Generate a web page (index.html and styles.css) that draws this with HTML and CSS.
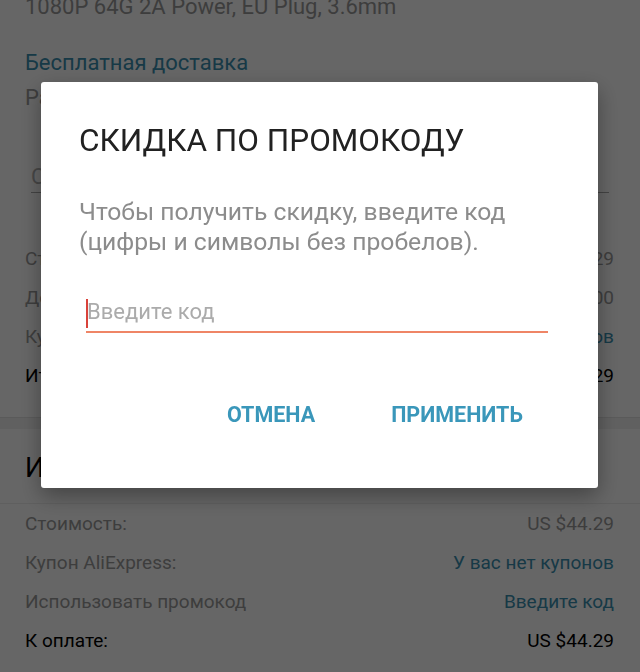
FILE: index.html
```html
<!DOCTYPE html>
<html lang="ru">
<head>
<meta charset="utf-8">
<title>Промокод</title>
<link rel="stylesheet" href="styles.css">
</head>
<body>
<div class="page">
  <section class="card card-top">
    <div class="product">1080P 64G 2A Power, EU Plug, 3.6mm</div>
    <div class="shipping">Бесплатная доставка</div>
    <div class="delivery">Расчетное время доставки: 15-30 дней</div>
    <div class="field"><span class="field-label">Сообщение для продавца</span></div>
    <div class="rows">
      <div class="row"><span class="lbl">Стоимость:</span><span class="val">US $44.29</span></div>
      <div class="row"><span class="lbl">Доставка:</span><span class="val">US $0.00</span></div>
      <div class="row"><span class="lbl">Купон продавца:</span><span class="val link">У вас нет купонов</span></div>
      <div class="row strong"><span class="lbl">Итого:</span><span class="val">US $44.29</span></div>
    </div>
  </section>
  <div class="gap"></div>
  <section class="card card-summary">
    <h2 class="summary-title">Итого по заказу</h2>
    <div class="rows">
      <div class="row"><span class="lbl">Стоимость:</span><span class="val">US $44.29</span></div>
      <div class="row"><span class="lbl">Купон AliExpress:</span><span class="val link">У вас нет купонов</span></div>
      <div class="row"><span class="lbl">Использовать промокод</span><span class="val link">Введите код</span></div>
      <div class="row strong"><span class="lbl">К оплате:</span><span class="val">US $44.29</span></div>
    </div>
  </section>
</div>

<div class="scrim">
  <div class="dialog">
    <h1 class="dialog-title">СКИДКА ПО ПРОМОКОДУ</h1>
    <p class="dialog-text">Чтобы получить скидку, введите код (цифры и символы без пробелов).</p>
    <div class="code-input"><span class="caret"></span><span class="placeholder">Введите код</span></div>
    <div class="actions">
      <span class="btn">ОТМЕНА</span>
      <span class="btn">ПРИМЕНИТЬ</span>
    </div>
  </div>
</div>
</body>
</html>
```
FILE: styles.css
```css
* { box-sizing: border-box; }
html, body { margin: 0; padding: 0; }
body {
  width: 640px;
  height: 672px;
  overflow: hidden;
  background: #fff;
  font-family: Roboto, "Noto Sans", sans-serif;
  color: #000;
}
.page { width: 640px; }
.card { background: #fff; padding: 0 26px 0 25px; }
.card-top { padding-bottom: 22px; border-bottom: 1px solid #e2e2e2; }
.product {
  margin-top: -8px;
  height: 30px;
  line-height: 30px;
  font-size: 22px;
  color: #9a9a9a;
  white-space: nowrap;
}
.shipping {
  margin-top: 26px;
  height: 30px;
  line-height: 30px;
  font-size: 22px;
  color: #3a8fb0;
}
.delivery {
  margin-top: 5px;
  height: 30px;
  line-height: 30px;
  font-size: 22px;
  color: #9a9a9a;
  white-space: nowrap;
}
.field {
  margin: 49px 5px 0 6px;
  height: 31px;
  border-bottom: 1px solid #a8a8a8;
}
.field-label {
  display: block;
  line-height: 30px;
  font-size: 22px;
  color: #b0b0b0;
}
.card-top .rows { margin-top: 46px; }
.rows { display: flex; flex-direction: column; }
.row {
  display: flex;
  justify-content: space-between;
  height: 39px;
  line-height: 40px;
  font-size: 19px;
  color: #9a9a9a;
}
.row .link { color: #3a8fb0; }
.row.strong { color: #000; }
.gap { height: 11px; background: #f1f1f1; }
.card-summary { padding-bottom: 20px; }
.summary-title {
  margin: 0 -26px 0 -25px;
  padding-left: 25px;
  height: 75px;
  line-height: 78px;
  font-size: 27px;
  font-weight: 400;
  border-bottom: 1px solid #eeeeee;
}

.scrim {
  position: fixed;
  inset: 0;
  background: rgba(0, 0, 0, 0.6);
  display: flex;
  flex-direction: column;
  align-items: center;
  padding-top: 82px;
}
.dialog {
  width: 557px;
  height: 406px;
  margin-left: -1px;
  background: #fff;
  border-radius: 3px;
  box-shadow: 0 8px 22px rgba(0, 0, 0, 0.35);
  padding: 41px 50px 0 38px;
}
.dialog-title {
  margin: 0;
  font-size: 31.5px;
  line-height: 36px;
  font-weight: 400;
  color: #212121;
  white-space: nowrap;
}
.dialog-text {
  margin: 38px 0 0;
  font-size: 24.7px;
  line-height: 29.5px;
  color: #8c8c8c;
}
.code-input {
  margin: 41px 0 0 7px;
  height: 36px;
  border-bottom: 2px solid #ef8566;
  display: flex;
  align-items: center;
}
.caret {
  width: 2px;
  height: 29px;
  margin-top: -2px;
  background: #d9423a;
}
.placeholder {
  margin-top: -4px;
  margin-left: -1px;
  font-size: 22px;
  line-height: 30px;
  color: #ababab;
}
.actions {
  display: flex;
  justify-content: flex-end;
  gap: 76px;
  margin-top: 70px;
  padding-right: 25px;
}
.btn {
  font-size: 21.5px;
  font-weight: 700;
  line-height: 24px;
  color: #3a97ba;
}
```
